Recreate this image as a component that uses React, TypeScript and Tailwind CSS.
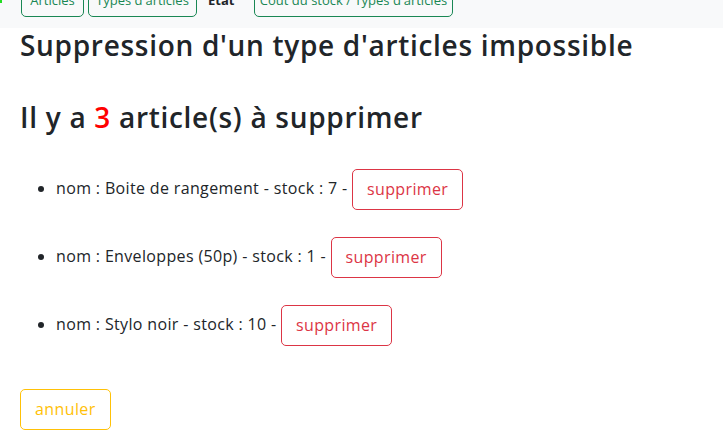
import React from "react";

const items = [
  { nom: "Boite de rangement", stock: 7 },
  { nom: "Enveloppes (50p)", stock: 1 },
  { nom: "Stylo noir", stock: 10 },
];

export default function App() {
  return (
    <div className="relative flex h-[448px] w-[723px] flex-col overflow-hidden bg-white text-[#212529]" style={{ fontFamily: '"Open Sans", "Noto Sans", sans-serif' }}>
      <div className="absolute left-0 top-0 h-[3px] w-[2px] bg-[#22dd22]" />
      <div className="flex h-[28px] shrink-0 items-start bg-[#f8f9fa]">
        <div className="-mt-[14px] flex items-start pl-[21px]">
          <button className="flex h-[31px] w-[63px] items-end justify-center rounded-[5px] border border-[#198754] pb-[8px] text-[13px] leading-[16px] text-[#198754]">Articles</button>
          <button className="ml-[4px] flex h-[31px] w-[109px] items-end justify-center rounded-[5px] border border-[#198754] pb-[8px] text-[13px] leading-[16px] text-[#198754]">Types d'articles</button>
          <span className="flex h-[31px] w-[57px] items-end pb-[9px] pl-[11px] text-[13px] font-bold leading-[16px] text-[#212529]">Etat</span>
          <button className="flex h-[31px] w-[199px] items-end justify-center rounded-[5px] border border-[#198754] pb-[8px] text-[13px] leading-[16px] text-[#198754]">Cout du stock / Types d'articles</button>
        </div>
      </div>
      <div className="flex flex-col items-start pl-[20px]">
        <h2 className="mt-[1px] text-[28px] font-semibold leading-[1.2] tracking-[0.7px]">Suppression d'un type d'articles impossible</h2>
        <h2 className="mt-[38px] text-[28px] font-semibold leading-[1.2] tracking-[0.7px]">
          Il y a <span className="text-[#ff0000]">3</span> article(s) à supprimer
        </h2>
        <ul className="mt-[34px] list-disc pl-[36px] text-[16px] tracking-[0.35px]">
          {items.map((it) => (
            <li key={it.nom} className="mb-[27px] h-[41px] leading-[41px]">
              nom : {it.nom} - stock : {it.stock} -{" "}
              <button className="h-[41px] rounded-[5px] border border-[#dc3545] px-[14px] align-middle text-[16px] leading-[39px] text-[#dc3545]">supprimer</button>
            </li>
          ))}
        </ul>
        <button className="mt-[17px] h-[41px] rounded-[5px] border border-[#ffc107] px-[14px] text-[16px] leading-[39px] tracking-[0.4px] text-[#ffc107]">annuler</button>
      </div>
    </div>
  );
}
